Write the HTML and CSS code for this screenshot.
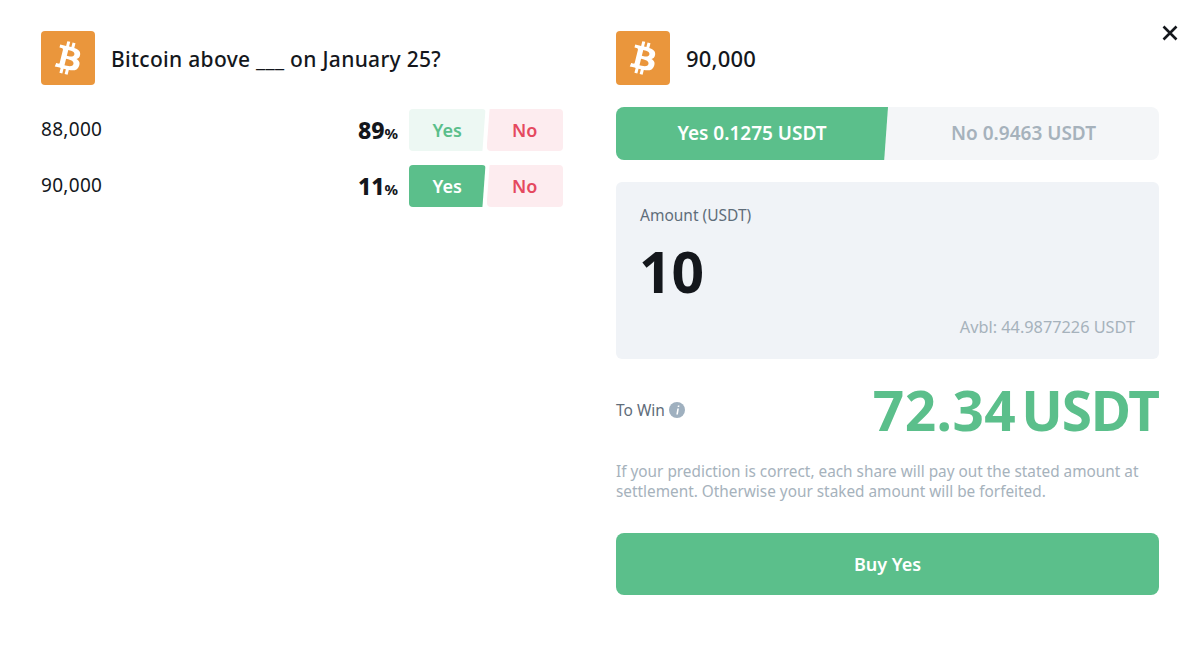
FILE: index.html
```html
<!DOCTYPE html>
<html lang="en">
<head>
    <meta charset="UTF-8">
    <meta name="viewport" content="width=device-width, initial-scale=1.0">
    <title>Bitcoin above ___ on January 25?</title>
    <link rel="stylesheet" href="styles.css">
</head>
<body>
    <div class="modal">
        <button class="close" aria-label="Close">
            <svg width="16" height="16" viewBox="0 0 16 16"><path d="M1.5 1.5l13 13M14.5 1.5l-13 13" stroke="#14171c" stroke-width="2.6" fill="none"/></svg>
        </button>

        <section class="markets">
            <header class="title-row">
                <div class="coin">
                    <svg width="54" height="54" viewBox="0 0 32 32"><path fill="#fff" d="M23.189 14.02c.314-2.096-1.283-3.223-3.465-3.975l.708-2.84-1.728-.43-.69 2.765c-.454-.114-.92-.22-1.385-.326l.695-2.783L15.596 6l-.708 2.839c-.376-.086-.746-.17-1.104-.26l.002-.009-2.384-.595-.46 1.846s1.283.294 1.256.312c.7.175.826.638.805 1.006l-.806 3.235c.048.012.11.03.18.057l-.183-.045-1.13 4.532c-.086.212-.303.531-.793.41.018.025-1.256-.313-1.256-.313l-.858 1.978 2.25.561c.418.105.828.215 1.231.318l-.715 2.872 1.727.43.708-2.84c.472.127.93.245 1.378.357l-.706 2.828 1.728.43.715-2.866c2.948.558 5.164.333 6.097-2.333.752-2.146-.037-3.385-1.588-4.192 1.13-.26 1.98-1.003 2.207-2.538zm-3.95 5.538c-.533 2.147-4.148.986-5.32.695l.95-3.805c1.172.293 4.929.872 4.37 3.11zm.535-5.569c-.487 1.953-3.495.96-4.47.717l.86-3.45c.975.243 4.118.696 3.61 2.733z"/></svg>
                </div>
                <h1>Bitcoin above ___ on January 25?</h1>
            </header>

            <div class="market">
                <span class="strike">88,000</span>
                <span class="chance">89<small>%</small></span>
                <div class="pair">
                    <span class="pick pick-yes">Yes</span>
                    <span class="pick pick-no">No</span>
                </div>
            </div>
            <div class="market">
                <span class="strike">90,000</span>
                <span class="chance">11<small>%</small></span>
                <div class="pair">
                    <span class="pick pick-yes active">Yes</span>
                    <span class="pick pick-no">No</span>
                </div>
            </div>
        </section>

        <section class="order">
            <header class="title-row">
                <div class="coin">
                    <svg width="54" height="54" viewBox="0 0 32 32"><path fill="#fff" d="M23.189 14.02c.314-2.096-1.283-3.223-3.465-3.975l.708-2.84-1.728-.43-.69 2.765c-.454-.114-.92-.22-1.385-.326l.695-2.783L15.596 6l-.708 2.839c-.376-.086-.746-.17-1.104-.26l.002-.009-2.384-.595-.46 1.846s1.283.294 1.256.312c.7.175.826.638.805 1.006l-.806 3.235c.048.012.11.03.18.057l-.183-.045-1.13 4.532c-.086.212-.303.531-.793.41.018.025-1.256-.313-1.256-.313l-.858 1.978 2.25.561c.418.105.828.215 1.231.318l-.715 2.872 1.727.43.708-2.84c.472.127.93.245 1.378.357l-.706 2.828 1.728.43.715-2.866c2.948.558 5.164.333 6.097-2.333.752-2.146-.037-3.385-1.588-4.192 1.13-.26 1.98-1.003 2.207-2.538zm-3.95 5.538c-.533 2.147-4.148.986-5.32.695l.95-3.805c1.172.293 4.929.872 4.37 3.11zm.535-5.569c-.487 1.953-3.495.96-4.47.717l.86-3.45c.975.243 4.118.696 3.61 2.733z"/></svg>
                </div>
                <h2>90,000</h2>
            </header>

            <div class="side-toggle">
                <div class="side side-yes">Yes&nbsp;0.1275 USDT</div>
                <div class="side side-no">No&nbsp;0.9463 USDT</div>
            </div>

            <div class="amount-box">
                <div class="amount-label">Amount (USDT)</div>
                <div class="amount-value">10</div>
                <div class="amount-avbl">Avbl: 44.9877226 USDT</div>
            </div>

            <div class="win-row">
                <div class="win-label">To Win
                    <svg width="16" height="16" viewBox="0 0 16 16"><circle cx="8" cy="8" r="8" fill="#9fb0bf"/><path d="M8.9 3.4h1.6l-.3 1.6H8.6zM8.3 6.4h1.6l-1 6.2H7.3z" fill="#fff"/></svg>
                </div>
                <div class="win-value"><span class="win-num">72.34</span><span class="win-unit">USDT</span></div>
            </div>

            <p class="note">If your prediction is correct, each share will pay out the stated amount at settlement. Otherwise your staked amount will be forfeited.</p>

            <button class="buy">Buy Yes</button>
        </section>
    </div>
</body>
</html>
```

FILE: styles.css
```css
* {
    box-sizing: border-box;
}
body {
    margin: 0;
    background-color: #fff;
    font-family: "Noto Sans", Arial, sans-serif;
    color: #14171c;
}
.modal {
    position: relative;
    width: 1200px;
    height: 657px;
    padding: 31px 41px 0;
    display: grid;
    grid-template-columns: 522px 543px;
    column-gap: 53px;
    overflow: hidden;
}
.close {
    position: absolute;
    top: 25px;
    right: 22px;
    width: 16px;
    height: 16px;
    padding: 0;
    border: none;
    background: none;
}
.title-row {
    display: flex;
    align-items: center;
    gap: 16px;
    height: 54px;
}
.coin {
    width: 54px;
    height: 54px;
    flex: none;
    background-color: #ea963c;
    border-radius: 4px;
}
.coin svg {
    display: block;
}
h1 {
    margin: 2px 0 0;
    font-size: 21px;
    font-weight: 500;
    letter-spacing: 0.3px;
}
h2 {
    margin: 0;
    font-size: 22px;
    font-weight: 500;
    letter-spacing: 0.2px;
}
.markets .title-row {
    margin-bottom: 24px;
}
.market {
    display: flex;
    align-items: center;
    height: 42px;
    margin-bottom: 14px;
}
.strike {
    flex: 1;
    font-size: 19px;
    letter-spacing: 0.3px;
    margin-top: -2px;
}
.chance {
    font-size: 23px;
    font-weight: 800;
    margin-right: 11px;
    margin-top: -1px;
}
.chance small {
    font-size: 15px;
    font-weight: 700;
}
.pair {
    display: flex;
    width: 154px;
    height: 42px;
    gap: 1px;
}
.pick {
    flex: 1;
    display: flex;
    align-items: center;
    justify-content: center;
    font-size: 18px;
    font-weight: 600;
    border-radius: 4px;
}
.pick-yes {
    background-color: #edf8f3;
    color: #5bbf8b;
    clip-path: polygon(0 0, 100% 0, 96% 100%, 0 100%);
}
.pick-yes.active {
    background-color: #5bbf8b;
    color: #fff;
}
.pick-no {
    background-color: #fdecef;
    color: #e5495f;
    clip-path: polygon(4% 0, 100% 0, 100% 100%, 0 100%);
}
.order .title-row {
    margin-bottom: 22px;
}
.side-toggle {
    display: flex;
    height: 53px;
    background-color: #f4f6f8;
    border-radius: 8px;
    overflow: hidden;
    font-size: 19px;
    font-weight: 600;
}
.side {
    flex: 1;
    display: flex;
    align-items: center;
    justify-content: center;
    padding-bottom: 2px;
}
.side-yes {
    flex: none;
    width: 272px;
    background-color: #5bbf8b;
    color: #fff;
    clip-path: polygon(0 0, 100% 0, 98.6% 100%, 0 100%);
}
.side-no {
    color: #a6b2bc;
}
.amount-box {
    margin-top: 22px;
    height: 177px;
    padding: 22px 24px 0;
    background-color: #f0f3f7;
    border-radius: 6px;
}
.amount-label {
    font-size: 15.5px;
    color: #5f6d7a;
}
.amount-value {
    margin-top: 8px;
    font-size: 57px;
    line-height: 74px;
    font-weight: 700;
    margin-left: -1px;
}
.amount-avbl {
    margin-top: 8px;
    text-align: right;
    font-size: 16.3px;
    color: #a6b2bc;
}
.win-row {
    display: flex;
    align-items: center;
    justify-content: space-between;
    margin-top: 24px;
    height: 56px;
}
.win-label {
    display: flex;
    align-items: center;
    gap: 4px;
    font-size: 15.5px;
    color: #5f6d7a;
    margin-top: -3px;
}
.win-value {
    font-size: 55px;
    line-height: 56px;
    font-weight: 700;
    color: #5bbf8b;
    margin-top: -3px;
}
.win-num {
    letter-spacing: 0.4px;
}
.win-unit {
    margin-left: 5px;
    letter-spacing: -1.1px;
}
.note {
    margin: 22px 0 0;
    font-size: 15.35px;
    line-height: 20px;
    color: #a6b2bc;
}
.buy {
    display: block;
    width: 100%;
    height: 62px;
    margin-top: 32px;
    border: none;
    border-radius: 8px;
    background-color: #5bbf8b;
    color: #fff;
    font-family: inherit;
    font-size: 18px;
    font-weight: 600;
}
```
